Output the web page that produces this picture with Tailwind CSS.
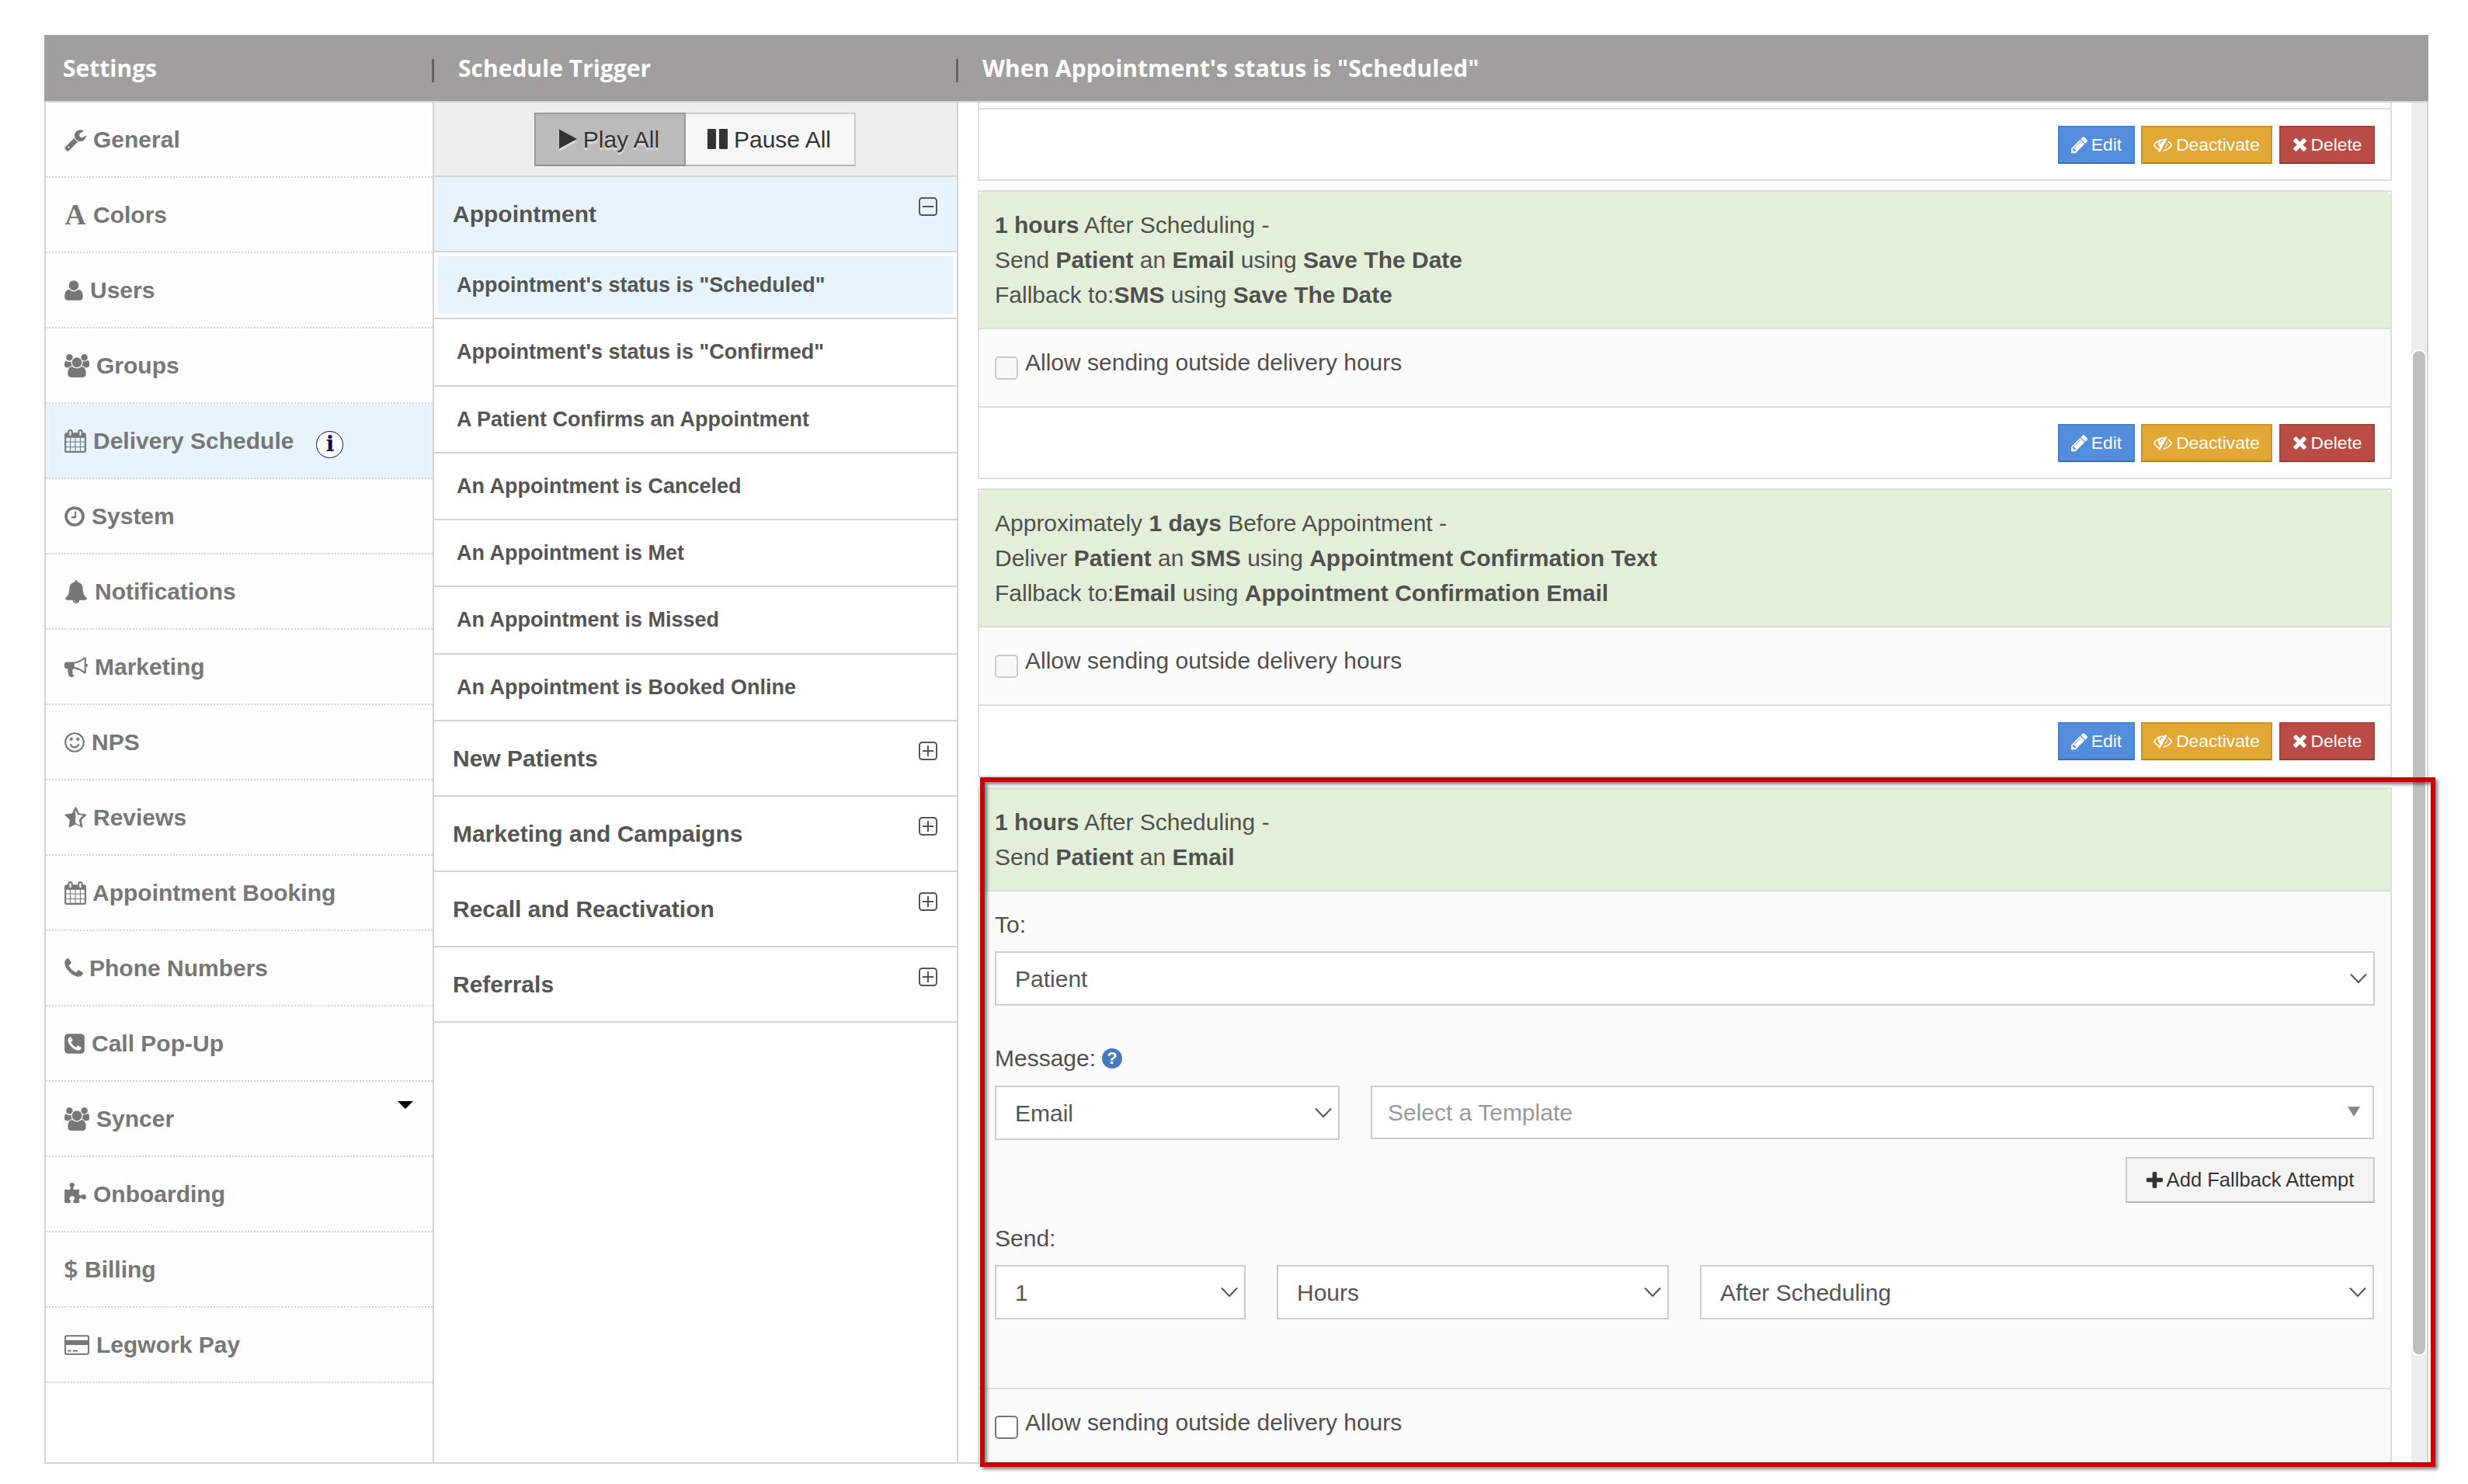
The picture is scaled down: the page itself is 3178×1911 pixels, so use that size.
<!DOCTYPE html>
<html lang="en">
<head>
    <meta charset="UTF-8">
    <meta name="viewport" content="width=device-width, initial-scale=1.0">
    <script src="https://cdn.jsdelivr.net/npm/@tailwindcss/browser@4"></script>
    <title>Settings - Delivery Schedule</title>
</head>
<body class="bg-white font-['Liberation_Sans',Arial,sans-serif] text-[30px] leading-[45px] text-[#505050] overflow-hidden">

    <!-- shared icons -->
    <svg class="hidden">
        <symbol id="users" viewBox="-64 0 1920 1792"><path d="M529 896q-162 5-265 128h-134q-82 0-138-40.500t-56-118.500q0-353 124-353 6 0 43.500 21t97.500 42.500 119 21.500q67 0 133-23-5 37-5 66 0 159 92 293zm1071 637q0 120-73 189.500t-194 69.500h-874q-121 0-194-69.500t-73-189.500q0-53 3.500-103.500t14-109 26.500-108.500 43-97.500 62-81 85.500-53.500 111.500-20q10 0 43 21.500t73 48 107 48 135 21.500 135-21.500 107-48 73-48 43-21.500q61 0 111.500 20t85.500 53.500 62 81 43 97.500 26.500 108.500 14 109 3.500 103.500zm-1024-1277q0 106-75 181t-181 75-181-75-75-181 75-181 181-75 181 75 75 181zm704 384q0 159-112.500 271.500t-271.500 112.500-271.500-112.500-112.500-271.500 112.500-271.500 271.500-112.500 271.500 112.500 112.500 271.500zm576 225q0 78-56 118.500t-138 40.500h-134q-103-123-265-128 92-134 92-293 0-29-5-66 66 23 133 23 59 0 119-21.500t97.500-42.500 43.500-21q124 0 124 353zm-128-609q0 106-75 181t-181 75-181-75-75-181 75-181 181-75 181 75 75 181z"/></symbol>
        <symbol id="calendar" viewBox="64 0 1664 1792"><path d="M192 1664h288v-288h-288v288zm352 0h320v-288h-320v288zm-352-352h288v-320h-288v320zm352 0h320v-320h-320v320zm-352-384h288v-288h-288v288zm736 736h320v-288h-320v288zm-384-736h320v-288h-320v288zm768 736h288v-288h-288v288zm-384-352h320v-320h-320v320zm-352-864v-288q0-13-9.500-22.500t-22.500-9.500h-64q-13 0-22.500 9.500t-9.500 22.500v288q0 13 9.500 22.500t22.500 9.500h64q13 0 22.500-9.500t9.500-22.500zm736 864h288v-320h-288v320zm-384-384h320v-288h-320v288zm384 0h288v-288h-288v288zm32-480v-288q0-13-9.500-22.500t-22.500-9.500h-64q-13 0-22.500 9.500t-9.500 22.500v288q0 13 9.500 22.500t22.500 9.500h64q13 0 22.500-9.500t9.500-22.500zm384-64v1280q0 52-38 90t-90 38h-1408q-52 0-90-38t-38-90v-1280q0-52 38-90t90-38h128v-96q0-66 47-113t113-47h64q66 0 113 47t47 113v96h384v-96q0-66 47-113t113-47h64q66 0 113 47t47 113v96h128q52 0 90 38t38 90z"/></symbol>
        <symbol id="pencil" viewBox="128 0 1515 1792"><path d="M491 1536l91-91-235-235-91 91v107h128v128h107zm523-928q0-22-22-22-10 0-17 7l-542 542q-7 7-7 17 0 22 22 22 10 0 17-7l542-542q7-7 7-17zm-54-192l416 416-832 832h-416v-416zm683 96q0 53-37 90l-166 166-416-416 166-165q36-38 90-38 53 0 91 38l235 234q37 39 37 91z"/></symbol>
        <symbol id="eye-slash" viewBox="0 0 1792 1792"><path d="M555 1335l78-141q-87-63-136-159t-49-203q0-121 61-225-229 117-381 353 167 258 427 375zm389-759q0-20-14-34t-34-14q-125 0-214.500 89.500t-89.500 214.500q0 20 14 34t34 14 34-14 14-34q0-86 61-147t147-61q20 0 34-14t14-34zm363-191q0 7-1 9-106 189-316 567t-315 566l-49 89q-10 16-28 16-12 0-134-70-16-10-16-28 0-12 44-87-143-65-263.500-173t-208.500-245q-20-31-20-69t20-69q153-235 380-371t496-136q89 0 180 17l54-97q10-16 28-16 5 0 18 6t31 15.500 33 18.500 31.500 18.500 19.500 11.500q16 10 16 27zm37 447q0 139-79 253.500t-209 164.500l280-502q8 45 8 84zm448 128q0 35-20 69-39 64-109 145-150 172-347.500 267t-419.500 95l74-132q212-18 392.500-137t301.500-307q-115-179-282-294l63-112q95 64 182.500 153t144.500 184q20 34 20 69z"/></symbol>
        <symbol id="times" viewBox="302 64 1188 1792"><path d="M1490 1322q0 40-28 68l-136 136q-28 28-68 28t-68-28l-294-294-294 294q-28 28-68 28t-68-28l-136-136q-28-28-28-68t28-68l294-294-294-294q-28-28-28-68t28-68l136-136q28-28 68-28t68 28l294 294 294-294q28-28 68-28t68 28l136 136q28 28 28 68t-28 68l-294 294 294 294q28 28 28 68z"/></symbol>
        <symbol id="chevron" viewBox="0 0 22 14"><path d="M1 1.500l10 10.500 10-10.500" fill="none" stroke="#555" stroke-width="2"/></symbol>
        <symbol id="expand" viewBox="0 0 24 24"><path d="M5 12h14M12 5v14" stroke="#555" stroke-width="2"/><rect x="1" y="1" width="22" height="22" rx="3.500" fill="none" stroke="#555" stroke-width="2"/></symbol>
    </svg>

    <div class="mt-[45px] ml-[57px] w-[3070px]">
        <!-- column titles -->
        <header class="flex items-center h-[87px] bg-[#a09f9d] border-b-2 border-[#d3d3d3] font-['Open_Sans',sans-serif] font-bold text-white">
            <div class="flex items-center justify-between w-[502px] pl-6">
                <span>Settings</span>
                <i class="w-[3px] h-[30px] mt-[7px] bg-[#616161]"></i>
            </div>
            <div class="flex items-center justify-between w-[675px] pl-[31px]">
                <span>Schedule Trigger</span>
                <i class="w-[3px] h-[30px] mt-[7px] bg-[#616161]"></i>
            </div>
            <div class="pl-[31px]">When Appointment's status is "Scheduled"</div>
        </header>

        <main class="flex h-[1753px] border-x-2 border-b-2 border-[#d3d3d3] overflow-hidden">
            <!-- settings menu -->
            <nav class="w-[500px] shrink-0 border-r-2 border-[#d3d3d3] font-bold text-[#777]">
                <a class="flex items-center gap-[9px] h-[97px] pl-6 bg-[#fdfdfd] border-b-2 border-dotted border-[#d3d3d3]">
                    <svg class="h-[30px] w-[28px]" fill="currentColor" viewBox="64 0 1664 1792"><path d="M448 1472q0-26-19-45t-45-19-45 19-19 45 19 45 45 19 45-19 19-45zm644-420l-682 682q-37 37-90 37-52 0-91-37l-106-108q-38-36-38-90 0-53 38-91l681-681q39 98 114.500 173.500t173.500 114.500zm634-435q0 39-23 106-47 134-164.500 217.500t-258.500 83.500q-185 0-316.500-131.500t-131.500-316.500 131.500-316.500 316.500-131.500q58 0 121.500 16.500t107.500 46.500q16 11 16 28t-16 28l-293 169v224l193 107q5-3 79-48.500t135.500-81 70.500-35.500q15 0 23.500 10t8.500 25z"/></svg>
                    General
                </a>
                <a class="flex items-center gap-[9px] h-[97px] pl-6 bg-[#fdfdfd] border-b-2 border-dotted border-[#d3d3d3]">
                    <span class="w-[28px] text-center font-['Liberation_Serif',serif] text-[38px]">A</span>
                    Colors
                </a>
                <a class="flex items-center gap-[9px] h-[97px] pl-6 bg-[#fdfdfd] border-b-2 border-dotted border-[#d3d3d3]">
                    <svg class="h-[30px] w-[24px]" fill="currentColor" viewBox="192 0 1408 1792"><path d="M1600 1405q0 120-73 189.500t-194 69.500h-874q-121 0-194-69.500t-73-189.500q0-53 3.500-103.500t14-109 26.500-108.500 43-97.500 62-81 85.500-53.500 111.500-20q9 0 42 21.500t74.500 48 108 48 133.500 21.500 133.500-21.500 108-48 74.500-48 42-21.500q61 0 111.500 20t85.500 53.500 62 81 43 97.500 26.500 108.500 14 109 3.500 103.500zm-320-893q0 159-112.500 271.500t-271.500 112.500-271.500-112.500-112.500-271.500 112.500-271.500 271.500-112.500 271.500 112.500 112.500 271.500z"/></svg>
                    Users
                </a>
                <a class="flex items-center gap-[9px] h-[97px] pl-6 bg-[#fdfdfd] border-b-2 border-dotted border-[#d3d3d3]">
                    <svg class="h-[30px] w-[32px]" fill="currentColor"><use href="#users"/></svg>
                    Groups
                </a>
                <a class="flex items-center gap-[9px] h-[97px] pl-6 bg-[#e7f4fe] border-b-2 border-dotted border-[#d3d3d3]">
                    <svg class="h-[30px] w-[28px]" fill="currentColor"><use href="#calendar"/></svg>
                    Delivery Schedule
                    <span class="flex items-center justify-center size-[35px] ml-[20px] mt-[9px] rounded-full border border-[#0b0b5e] bg-white text-[#0b0b5e] font-['DejaVu_Serif',serif] font-bold text-[28px] leading-none">i</span>
                </a>
                <a class="flex items-center gap-[9px] h-[97px] pl-6 bg-[#fdfdfd] border-b-2 border-dotted border-[#d3d3d3]">
                    <svg class="h-[30px] w-[26px]" fill="currentColor" viewBox="128 0 1536 1792"><path d="M1024 544v448q0 14-9 23t-23 9h-320q-14 0-23-9t-9-23v-64q0-14 9-23t23-9h224v-352q0-14 9-23t23-9h64q14 0 23 9t9 23zm416 352q0-148-73-273t-198-198-273-73-273 73-198 198-73 273 73 273 198 198 273 73 273-73 198-198 73-273zm224 0q0 209-103 385.500t-279.500 279.500-385.500 103-385.500-103-279.500-279.500-103-385.500 103-385.500 279.500-279.500 385.500-103 385.500 103 279.500 279.500 103 385.500z"/></svg>
                    System
                </a>
                <a class="flex items-center gap-[9px] h-[97px] pl-6 bg-[#fdfdfd] border-b-2 border-dotted border-[#d3d3d3]">
                    <svg class="h-[30px] w-[30px]" fill="currentColor" viewBox="0 0 1792 1792"><path d="M912 1696q0-16-16-16-59 0-101.500-42.500t-42.500-101.500q0-16-16-16t-16 16q0 73 51.500 124.500t124.500 51.500q16 0 16-16zm816-288q0 52-38 90t-90 38h-448q0 106-75 181t-181 75-181-75-75-181h-448q-52 0-90-38t-38-90q50-42 91-88t85-119.500 74.500-158.500 50-206 19.500-260q0-152 117-282.500t307-158.500q-8-19-8-39 0-40 28-68t68-28 68 28 28 68q0 20-8 39 190 28 307 158.500t117 282.500q0 139 19.500 260t50 206 74.500 158.500 85 119.500 91 88z"/></svg>
                    Notifications
                </a>
                <a class="flex items-center gap-[9px] h-[97px] pl-6 bg-[#fdfdfd] border-b-2 border-dotted border-[#d3d3d3]">
                    <svg class="h-[30px] w-[30px]" fill="currentColor" viewBox="0 0 1792 1792"><path d="M1664 640q53 0 90.500 37.500t37.500 90.500-37.500 90.500-90.500 37.500v384q0 52-38 90t-90 38q-417-347-812-380-58 19-91 66t-31 100.500 40 92.500q-20 33-23 65.500t6 58 33.500 55 48 50 61.500 50.500q-29 58-111.500 83t-168.500 11.500-132-55.500q-7-23-29.500-87.500t-32-94.500-23-89-15-101 3.500-98.500 22-110.500h-122q-66 0-113-47t-47-113v-192q0-66 47-113t113-47h480q435 0 896-384 52 0 90 38t38 90v384zm-128 604v-954q-394 302-768 343v270q377 42 768 341z"/></svg>
                    Marketing
                </a>
                <a class="flex items-center gap-[9px] h-[97px] pl-6 bg-[#fdfdfd] border-b-2 border-dotted border-[#d3d3d3]">
                    <svg class="h-[30px] w-[26px]" fill="currentColor" viewBox="128 0 1536 1792"><path d="M1262 1075q-37 121-138 195t-228 74-228-74-138-195q-8-25 4-48.500t38-31.500q25-8 48.500 4t31.500 38q25 80 92.500 129.500t151.500 49.500 151.500-49.500 92.500-129.500q8-26 32-38t49-4 37 31.500 4 48.500zm-494-435q0 53-37.500 90.500t-90.500 37.500-90.500-37.500-37.500-90.500 37.500-90.500 90.500-37.500 90.500 37.500 37.500 90.500zm512 0q0 53-37.500 90.500t-90.500 37.500-90.500-37.500-37.500-90.500 37.500-90.500 90.500-37.500 90.500 37.500 37.500 90.500zm256 256q0-130-51-248.500t-136.500-204-204-136.500-248.500-51-248.500 51-204 136.500-136.500 204-51 248.500 51 248.500 136.500 204 204 136.500 248.500 51 248.500-51 204-136.500 136.500-204 51-248.500zm128 0q0 209-103 385.500t-279.500 279.500-385.500 103-385.500-103-279.500-279.500-103-385.500 103-385.500 279.500-279.500 385.500-103 385.500 103 279.500 279.500 103 385.500z"/></svg>
                    NPS
                </a>
                <a class="flex items-center gap-[9px] h-[97px] pl-6 bg-[#fdfdfd] border-b-2 border-dotted border-[#d3d3d3]">
                    <svg class="h-[30px] w-[28px]" fill="currentColor" viewBox="64 0 1664 1792"><path d="M1250 957l238-233-329-48-75-11-33-67-147-298v1003l66 35 294 155-56-328-13-74zm478-234l-363 354 86 500q5 33-6 51.500t-34 18.500q-17 0-40-12l-449-236-449 236q-23 12-40 12-23 0-34-18.500t-6-51.500l86-500-364-354q-32-32-23-59.500t54-34.500l502-73 225-455q20-41 49-41 28 0 49 41l225 455 502 73q45 7 54 34.500t-24 59.500z"/></svg>
                    Reviews
                </a>
                <a class="flex items-center gap-[8px] h-[97px] pl-6 bg-[#fdfdfd] border-b-2 border-dotted border-[#d3d3d3]">
                    <svg class="h-[30px] w-[28px]" fill="currentColor"><use href="#calendar"/></svg>
                    Appointment Booking
                </a>
                <a class="flex items-center gap-[8px] h-[97px] pl-6 bg-[#fdfdfd] border-b-2 border-dotted border-[#d3d3d3]">
                    <svg class="h-[30px] w-[24px]" fill="currentColor" viewBox="192 0 1408 1792"><path d="M1600 1240q0 27-10 70.500t-21 68.500q-21 50-122 106-94 51-186 51-27 0-53-3.500t-57.500-12.500-47-14.500-55.500-20.500-49-18q-98-35-175-83-127-79-264-216t-216-264q-48-77-83-175-3-9-18-49t-20.500-55.500-14.500-47-12.500-57.500-3.500-53q0-92 51-186 56-101 106-122 25-11 68.500-21t70.500-10q14 0 21 3 18 6 53 76 11 19 30 54t35 63.500 31 53.500q3 4 17.500 25t21.500 35.500 7 28.500q0 20-28.500 50t-62 55-62 53-28.500 46q0 9 5 22.500t8.500 20.500 14 24 11.500 19q76 137 174 235t235 174q2 1 19 11.500t24 14 20.500 8.500 22.500 5q18 0 46-28.500t53-62 55-62 50-28.500q14 0 28.500 7t35.500 21.500 25 17.500q25 15 53.500 31t63.500 35 54 30q70 35 76 53 3 7 3 21z"/></svg>
                    Phone Numbers
                </a>
                <a class="flex items-center gap-[9px] h-[97px] pl-6 bg-[#fdfdfd] border-b-2 border-dotted border-[#d3d3d3]">
                    <svg class="h-[30px] w-[26px]" fill="currentColor" viewBox="128 0 1536 1792"><path d="M1408 1193q0-11-2-16-3-8-38.500-29.500t-88.500-49.500l-53-29q-5-3-19-13t-25-15-21-5q-18 0-47 32.500t-57 65.500-44 33q-7 0-16.500-3.500t-15.500-6.500-17-9.500-14-8.500q-99-55-170.500-126.500t-126.500-170.500q-2-3-8.500-14t-9.500-17-6.500-15.500-3.500-16.500q0-13 20.500-33.500t45-38.500 45-39.500 20.500-36.500q0-10-5-21t-15-25-13-19q-3-6-15-28.500t-25-45.500-26.500-47.500-25-40.500-16.500-18-16-2q-48 0-101 22-46 21-80 94.500t-34 130.500q0 16 2.500 34t5 30.500 9 33 10 29.500 12.500 33 11 30q60 164 216.500 320.500t320.500 216.500q6 2 30 11t33 12.500 29.500 10 33 9 30.500 5 34 2.500q57 0 130.500-34t94.500-80q22-53 22-101zm256-777v960q0 119-84.500 203.500t-203.500 84.500h-960q-119 0-203.500-84.500t-84.500-203.500v-960q0-119 84.500-203.500t203.500-84.500h960q119 0 203.500 84.500t84.500 203.500z"/></svg>
                    Call Pop-Up
                </a>
                <a class="flex items-center gap-[9px] h-[97px] pl-6 pr-[25px] bg-[#fdfdfd] border-b-2 border-dotted border-[#d3d3d3]">
                    <svg class="h-[30px] w-[32px]" fill="currentColor"><use href="#users"/></svg>
                    Syncer
                    <svg class="w-5 h-[10px] ml-auto mb-[35px]" viewBox="0 0 20 10"><path d="M0 0h20l-10 10z"/></svg>
                </a>
                <a class="flex items-center gap-[9px] h-[97px] pl-6 bg-[#fdfdfd] border-b-2 border-dotted border-[#d3d3d3]">
                    <svg class="h-[30px] w-[28px]" fill="currentColor" viewBox="64 0 1664 1792"><path d="M1728 1098q0 81-44.500 135t-123.500 54q-41 0-77.500-17.500t-59-38-56.500-38-71-17.500q-110 0-110 124 0 39 16 115t15 115v5q-22 0-33 1-34 3-97.500 11.500t-115.500 13.500-98 5q-61 0-103-26.500t-42-83.500q0-37 17.500-71t38-56.500 38-59 17.500-77.500q0-79-54-123.500t-135-44.500q-84 0-143 45.500t-59 127.500q0 43 15 83t33.500 64.500 33.500 53 15 50.500q0 45-46 89-37 35-117 35-95 0-245-24-9-2-27.500-4t-27.500-4l-13-2q-1 0-3-1-2 0-2-1v-1024q2 1 17.500 3.500t34 5 21.500 3.500q150 24 245 24 80 0 117-35 46-44 46-89 0-22-15-50.500t-33.500-53-33.500-64.500-15-83q0-82 59-127.500t144-45.500q80 0 134 44.500t54 123.500q0 41-17.500 77.500t-38 59-38 56.500-17.500 71q0 57 42 83.500t103 26.500q64 0 180-15t163-17v2q-1 2-3.500 17.500t-5 34-3.500 21.500q-24 150-24 245 0 80 35 117 44 46 89 46 22 0 50.500-15t53-33.500 64.500-33.500 83-15q82 0 127.500 59t45.500 143z"/></svg>
                    Onboarding
                </a>
                <a class="flex items-center gap-[9px] h-[97px] pl-6 bg-[#fdfdfd] border-b-2 border-dotted border-[#d3d3d3]">
                    <span class="w-[17px] flex justify-center font-['Open_Sans',sans-serif] font-semibold text-[33px]">$</span>
                    Billing
                </a>
                <a class="flex items-center gap-[9px] h-[97px] pl-6 bg-[#fdfdfd] border-b-2 border-dotted border-[#d3d3d3]">
                    <svg class="h-[30px] w-[32px]" fill="currentColor" viewBox="0 0 32 30"><rect x="1" y="3.200" width="30" height="23.600" rx="2" fill="none" stroke="currentColor" stroke-width="2"/><path d="M1 8.800h30v6.200H1zM4.300 21.500h4.200v2H4.300zM10.600 21.500h6.500v2h-6.500z"/></svg>
                    Legwork Pay
                </a>
            </nav>

            <!-- triggers -->
            <section class="w-[675px] shrink-0 border-r-2 border-[#d3d3d3] font-bold text-[#555]">
                <div class="flex items-center justify-center h-[96px] pr-px bg-[#eee] border-b-2 border-[#d3d3d3] font-normal text-[#333]">
                    <button class="flex items-center justify-center gap-[8px] w-[195px] h-[69px] pr-[2px] bg-[#bbb] border-2 border-[#999] border-b-[#8c8c8c] text-shadow-[0_3px_2px_rgb(255_255_255/0.6)]">
                        <svg class="w-[23px] h-[26px] drop-shadow-[0_3px_1px_rgb(255_255_255/0.6)]" viewBox="0 0 23 26" fill="#333"><path d="M0 0.500v25l23-12.500z"/></svg>
                        Play All
                    </button>
                    <button class="flex items-center justify-center gap-[8px] w-[219px] h-[69px] pr-[2px] bg-[#f6f6f6] border-2 border-l-0 border-[#ccc] border-b-[#b3b3b3]">
                        <svg class="w-[26px] h-[26px]" viewBox="0 0 26 26" fill="#333"><rect width="11" height="26" rx="1"/><rect x="15" width="11" height="26" rx="1"/></svg>
                        Pause All
                    </button>
                </div>
                <div class="flex justify-between h-[97px] pl-[24px] pr-[25px] bg-[#e7f4fe] border-b-2 border-[#d3d3d3] leading-[95px]">
                    Appointment
                    <svg class="size-6 mt-[26px]" viewBox="0 0 24 24" fill="none" stroke="#555" stroke-width="2"><rect x="1" y="1" width="22" height="22" rx="3.500"/><path d="M5 12h14"/></svg>
                </div>
                <div class="text-[27px]">
                    <div class="flex h-[86px] px-[5px] pt-[5px] pb-[5px] border-b-2 border-[#d3d3d3]"><span class="w-full h-[74px] pl-[24px] bg-[#e7f4fe] leading-[74px]">Appointment's status is "Scheduled"</span></div>
                    <div class="flex items-center h-[87px] pl-[29px] border-b-2 border-[#d3d3d3]">Appointment's status is "Confirmed"</div>
                    <div class="flex items-center h-[86px] pl-[29px] border-b-2 border-[#d3d3d3]">A Patient Confirms an Appointment</div>
                    <div class="flex items-center h-[86px] pl-[29px] border-b-2 border-[#d3d3d3]">An Appointment is Canceled</div>
                    <div class="flex items-center h-[86px] pl-[29px] border-b-2 border-[#d3d3d3]">An Appointment is Met</div>
                    <div class="flex items-center h-[87px] pl-[29px] border-b-2 border-[#d3d3d3]">An Appointment is Missed</div>
                    <div class="flex items-center h-[86px] pl-[29px] border-b-2 border-[#d3d3d3]">An Appointment is Booked Online</div>
                </div>
                <div class="flex justify-between h-[97px] pl-[24px] pr-[25px] border-b-2 border-[#d3d3d3] leading-[95px]">
                    New Patients
                    <svg class="size-6 mt-[26px]"><use href="#expand"/></svg>
                </div>
                <div class="flex justify-between h-[97px] pl-[24px] pr-[25px] border-b-2 border-[#d3d3d3] leading-[95px]">
                    Marketing and Campaigns
                    <svg class="size-6 mt-[26px]"><use href="#expand"/></svg>
                </div>
                <div class="flex justify-between h-[97px] pl-[24px] pr-[25px] border-b-2 border-[#d3d3d3] leading-[95px]">
                    Recall and Reactivation
                    <svg class="size-6 mt-[26px]"><use href="#expand"/></svg>
                </div>
                <div class="flex justify-between h-[97px] pl-[24px] pr-[25px] border-b-2 border-[#d3d3d3] leading-[95px]">
                    Referrals
                    <svg class="size-6 mt-[26px]"><use href="#expand"/></svg>
                </div>
            </section>

            <!-- messages -->
            <section class="flex-1 pl-[25px] pr-[25px]">
                <!-- end of the card that is scrolled out -->
                <div class="mb-3 border-2 border-t-0 border-[#ddd]">
                    <div class="h-[7px] bg-[#fbfbfb]"></div>
                    <div class="flex items-center justify-end h-[92px] pr-5 border-t-2 border-[#ddd] text-[22.800px] text-white text-shadow-[0_-2px_0_rgb(0_0_0/0.25)]">
                        <button class="flex items-center justify-center gap-[5px] w-[99px] h-[49px] mr-2 bg-[#548ddc] border-2 border-[#497fcb] border-b-[#3e6cad]"><svg class="w-[21px] h-[25px]" fill="#fff"><use href="#pencil"/></svg>Edit</button>
                        <button class="flex items-center justify-center gap-[5px] w-[169px] h-[49px] mr-[9px] bg-[#e2a734] border-2 border-[#c9932d] border-b-[#b08127]"><svg class="size-6" fill="#fff"><use href="#eye-slash"/></svg>Deactivate</button>
                        <button class="flex items-center justify-center gap-[6px] w-[123px] h-[49px] pl-px bg-[#bb4c45] border-2 border-[#a6423c] border-b-[#913a35]"><svg class="w-[17px] h-[25px]" fill="#fff"><use href="#times"/></svg>Delete</button>
                    </div>
                </div>

                <div class="mb-3 border-2 border-[#ddd]">
                    <div class="h-[175px] p-5 rounded-t-[5px] bg-[#e4efd9]">
                        <p><b>1 hours</b> After Scheduling -</p>
                        <p>Send <b>Patient</b> an <b>Email</b> using <b>Save The Date</b></p>
                        <p>Fallback to:<b>SMS</b> using <b>Save The Date</b></p>
                    </div>
                    <div class="flex h-[101px] px-5 pt-5 bg-[#fbfbfb] border-t-2 border-[#ddd]">
                        <span class="size-[30px] mt-[15px] mr-[9px] rounded-[5px] border-2 border-[#ccc] bg-[#f8f8f8]"></span>
                        Allow sending outside delivery hours
                    </div>
                    <div class="flex items-center justify-end h-[92px] pr-5 border-t-2 border-[#ddd] text-[22.800px] text-white text-shadow-[0_-2px_0_rgb(0_0_0/0.25)]">
                        <button class="flex items-center justify-center gap-[5px] w-[99px] h-[49px] mr-2 bg-[#548ddc] border-2 border-[#497fcb] border-b-[#3e6cad]"><svg class="w-[21px] h-[25px]" fill="#fff"><use href="#pencil"/></svg>Edit</button>
                        <button class="flex items-center justify-center gap-[5px] w-[169px] h-[49px] mr-[9px] bg-[#e2a734] border-2 border-[#c9932d] border-b-[#b08127]"><svg class="size-6" fill="#fff"><use href="#eye-slash"/></svg>Deactivate</button>
                        <button class="flex items-center justify-center gap-[6px] w-[123px] h-[49px] pl-px bg-[#bb4c45] border-2 border-[#a6423c] border-b-[#913a35]"><svg class="w-[17px] h-[25px]" fill="#fff"><use href="#times"/></svg>Delete</button>
                    </div>
                </div>

                <div class="mb-[13px] border-2 border-[#ddd]">
                    <div class="h-[175px] p-5 rounded-t-[5px] bg-[#e4efd9]">
                        <p>Approximately <b>1 days</b> Before Appointment -</p>
                        <p>Deliver <b>Patient</b> an <b>SMS</b> using <b>Appointment Confirmation Text</b></p>
                        <p>Fallback to:<b>Email</b> using <b>Appointment Confirmation Email</b></p>
                    </div>
                    <div class="flex h-[101px] px-5 pt-5 bg-[#fbfbfb] border-t-2 border-[#ddd]">
                        <span class="size-[30px] mt-[15px] mr-[9px] rounded-[5px] border-2 border-[#ccc] bg-[#f8f8f8]"></span>
                        Allow sending outside delivery hours
                    </div>
                    <div class="flex items-center justify-end h-[92px] pr-5 border-t-2 border-[#ddd] text-[22.800px] text-white text-shadow-[0_-2px_0_rgb(0_0_0/0.25)]">
                        <button class="flex items-center justify-center gap-[5px] w-[99px] h-[49px] mr-2 bg-[#548ddc] border-2 border-[#497fcb] border-b-[#3e6cad]"><svg class="w-[21px] h-[25px]" fill="#fff"><use href="#pencil"/></svg>Edit</button>
                        <button class="flex items-center justify-center gap-[5px] w-[169px] h-[49px] mr-[9px] bg-[#e2a734] border-2 border-[#c9932d] border-b-[#b08127]"><svg class="size-6" fill="#fff"><use href="#eye-slash"/></svg>Deactivate</button>
                        <button class="flex items-center justify-center gap-[6px] w-[123px] h-[49px] pl-px bg-[#bb4c45] border-2 border-[#a6423c] border-b-[#913a35]"><svg class="w-[17px] h-[25px]" fill="#fff"><use href="#times"/></svg>Delete</button>
                    </div>
                </div>

                <!-- card in edit mode -->
                <div class="border-2 border-b-0 border-[#ddd]">
                    <div class="h-[130px] p-5 rounded-t-[5px] bg-[#e4efd9]">
                        <p><b>1 hours</b> After Scheduling -</p>
                        <p>Send <b>Patient</b> an <b>Email</b></p>
                    </div>
                    <div class="h-[641px] px-5 pt-5 bg-[#fbfbfb] border-t-2 border-[#ddd]">
                        <p>To:</p>
                        <div class="flex items-center justify-between h-[70px] mt-3 pl-6 pr-2 bg-white border-2 border-[#ccc] text-[#555]">
                            Patient
                            <svg class="w-[22px] h-[14px]"><use href="#chevron"/></svg>
                        </div>
                        <p class="flex items-center mt-[45px]">
                            Message:
                            <span class="flex items-center justify-center size-[26px] ml-2 rounded-full bg-[#4679bd] text-white text-[22px] leading-none font-bold">?</span>
                        </p>
                        <div class="flex mt-[13px] pr-px">
                            <div class="flex items-center justify-between w-[444px] h-[70px] pl-6 pr-2 bg-white border-2 border-[#ccc] text-[#555]">
                                Email
                                <svg class="w-[22px] h-[14px]"><use href="#chevron"/></svg>
                            </div>
                            <div class="flex items-center justify-between flex-1 h-[69px] ml-10 pl-5 pr-4 bg-white border-2 border-[#ccc] text-[#999]">
                                Select a Template
                                <svg class="w-4 h-[13px] mb-[2px]" viewBox="0 0 16 13" fill="#888"><path d="M0 0h16l-8 13z"/></svg>
                            </div>
                        </div>
                        <div class="flex justify-end mt-[22px]">
                            <button class="flex items-center justify-center gap-[5px] w-[321px] h-[59px] bg-[#f4f4f4] border-2 border-[#ccc] border-b-[#b3b3b3] text-[25.600px] text-[#333] text-shadow-[0_2px_2px_white]">
                                <svg class="size-[21px]" viewBox="192 128 1408 1408" fill="#333"><path d="M1600 736v192q0 40-28 68t-68 28h-416v416q0 40-28 68t-68 28h-192q-40 0-68-28t-28-68v-416h-416q-40 0-68-28t-28-68v-192q0-40 28-68t68-28h416v-416q0-40 28-68t68-28h192q40 0 68 28t28 68v416h416q40 0 68 28t28 68z"/></svg>
                                Add Fallback Attempt
                            </button>
                        </div>
                        <p class="mt-[23px]">Send:</p>
                        <div class="flex gap-10 mt-3 pr-px text-[#555]">
                            <div class="flex items-center justify-between w-[323px] h-[70px] pl-6 pr-2 bg-white border-2 border-[#ccc]">
                                1
                                <svg class="w-[22px] h-[14px]"><use href="#chevron"/></svg>
                            </div>
                            <div class="flex items-center justify-between w-[505px] h-[70px] pl-6 pr-2 bg-white border-2 border-[#ccc]">
                                Hours
                                <svg class="w-[22px] h-[14px]"><use href="#chevron"/></svg>
                            </div>
                            <div class="flex items-center justify-between flex-1 h-[70px] pl-6 pr-2 bg-white border-2 border-[#ccc]">
                                After Scheduling
                                <svg class="w-[22px] h-[14px]"><use href="#chevron"/></svg>
                            </div>
                        </div>
                    </div>
                    <div class="flex h-[101px] px-5 pt-5 bg-[#fbfbfb] border-t-2 border-[#ddd]">
                        <span class="size-[30px] mt-[14px] mr-[9px] rounded-[5px] border-2 border-[#767676] bg-white"></span>
                        Allow sending outside delivery hours
                    </div>
                </div>
            </section>

            <!-- scrollbar -->
            <div class="w-5 bg-[#eee]">
                <div class="w-5 h-[1296px] mt-[318px] rounded-full border-2 border-white bg-[#bfbfbf]"></div>
            </div>
        </main>
    </div>

    <!-- highlight frame -->
    <div class="absolute left-[1262px] top-[1001px] w-[1874px] h-[888px] border-[6px] border-[#c00] drop-shadow-[3px_3px_2px_rgb(0_0_0/0.5)]"></div>
</body>
</html>
